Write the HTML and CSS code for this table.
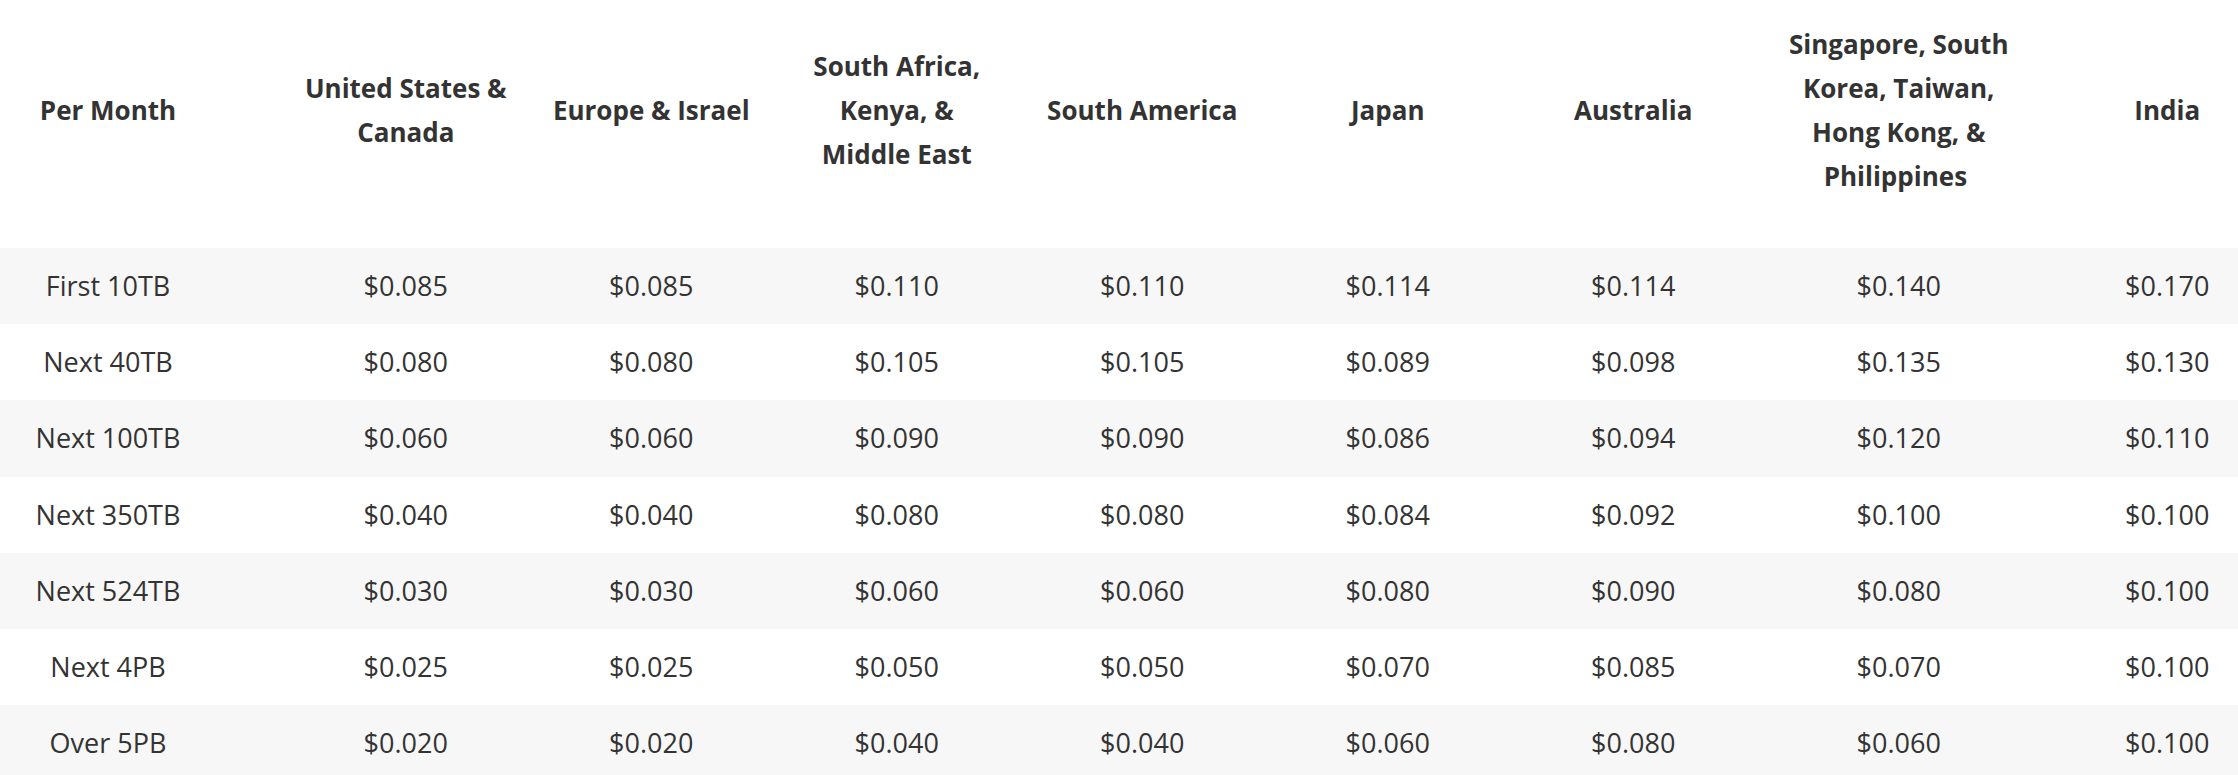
FILE: index.html
```html
<!DOCTYPE html>
<html lang="en">
<head>
<meta charset="utf-8">
<title>Data Transfer Pricing</title>
<link rel="stylesheet" href="styles.css">
</head>
<body>
<div class="price-table">
  <div class="row head">
    <div class="cell first">Per Month</div>
    <div class="cell">United States &amp;<br>Canada</div>
    <div class="cell">Europe &amp; Israel</div>
    <div class="cell">South Africa,<br>Kenya, &amp;<br>Middle East</div>
    <div class="cell">South America</div>
    <div class="cell">Japan</div>
    <div class="cell">Australia</div>
    <div class="cell">Singapore, South<br>Korea, Taiwan,<br>Hong Kong, &amp;<br>Philippines&nbsp;</div>
    <div class="cell last">India</div>
  </div>
  <div class="row body alt">
    <div class="cell first">First 10TB</div>
    <div class="cell">$0.085</div><div class="cell">$0.085</div><div class="cell">$0.110</div><div class="cell">$0.110</div>
    <div class="cell">$0.114</div><div class="cell">$0.114</div><div class="cell">$0.140</div><div class="cell last">$0.170</div>
  </div>
  <div class="row body">
    <div class="cell first">Next 40TB</div>
    <div class="cell">$0.080</div><div class="cell">$0.080</div><div class="cell">$0.105</div><div class="cell">$0.105</div>
    <div class="cell">$0.089</div><div class="cell">$0.098</div><div class="cell">$0.135</div><div class="cell last">$0.130</div>
  </div>
  <div class="row body alt">
    <div class="cell first">Next 100TB</div>
    <div class="cell">$0.060</div><div class="cell">$0.060</div><div class="cell">$0.090</div><div class="cell">$0.090</div>
    <div class="cell">$0.086</div><div class="cell">$0.094</div><div class="cell">$0.120</div><div class="cell last">$0.110</div>
  </div>
  <div class="row body">
    <div class="cell first">Next 350TB</div>
    <div class="cell">$0.040</div><div class="cell">$0.040</div><div class="cell">$0.080</div><div class="cell">$0.080</div>
    <div class="cell">$0.084</div><div class="cell">$0.092</div><div class="cell">$0.100</div><div class="cell last">$0.100</div>
  </div>
  <div class="row body alt">
    <div class="cell first">Next 524TB</div>
    <div class="cell">$0.030</div><div class="cell">$0.030</div><div class="cell">$0.060</div><div class="cell">$0.060</div>
    <div class="cell">$0.080</div><div class="cell">$0.090</div><div class="cell">$0.080</div><div class="cell last">$0.100</div>
  </div>
  <div class="row body">
    <div class="cell first">Next 4PB</div>
    <div class="cell">$0.025</div><div class="cell">$0.025</div><div class="cell">$0.050</div><div class="cell">$0.050</div>
    <div class="cell">$0.070</div><div class="cell">$0.085</div><div class="cell">$0.070</div><div class="cell last">$0.100</div>
  </div>
  <div class="row body alt">
    <div class="cell first">Over 5PB</div>
    <div class="cell">$0.020</div><div class="cell">$0.020</div><div class="cell">$0.040</div><div class="cell">$0.040</div>
    <div class="cell">$0.060</div><div class="cell">$0.080</div><div class="cell">$0.060</div><div class="cell last">$0.100</div>
  </div>
</div>
</body>
</html>
```
FILE: styles.css
```css
html, body {
  margin: 0;
  padding: 0;
  background: #ffffff;
}
body {
  overflow: hidden;
  font-family: "Open Sans", "Noto Sans", sans-serif;
  font-size: 26px;
  color: #333333;
}
.price-table {
  width: 2238px;
}
.row {
  display: grid;
  grid-template-columns: 283px repeat(6, 245.5px) 285.5px 1fr;
  align-items: center;
  text-align: center;
}
.row.head {
  height: 248px;
  box-sizing: border-box;
  padding-bottom: 28px;
  font-weight: 700;
  line-height: 44px;
}
.row.body {
  height: 76.2px;
  font-size: 27px;
  line-height: 36px;
}
.row.alt {
  background: #f7f7f7;
}
.cell.first {
  padding-right: 67px;
}
.cell.last {
  padding-left: 55px;
}
```
